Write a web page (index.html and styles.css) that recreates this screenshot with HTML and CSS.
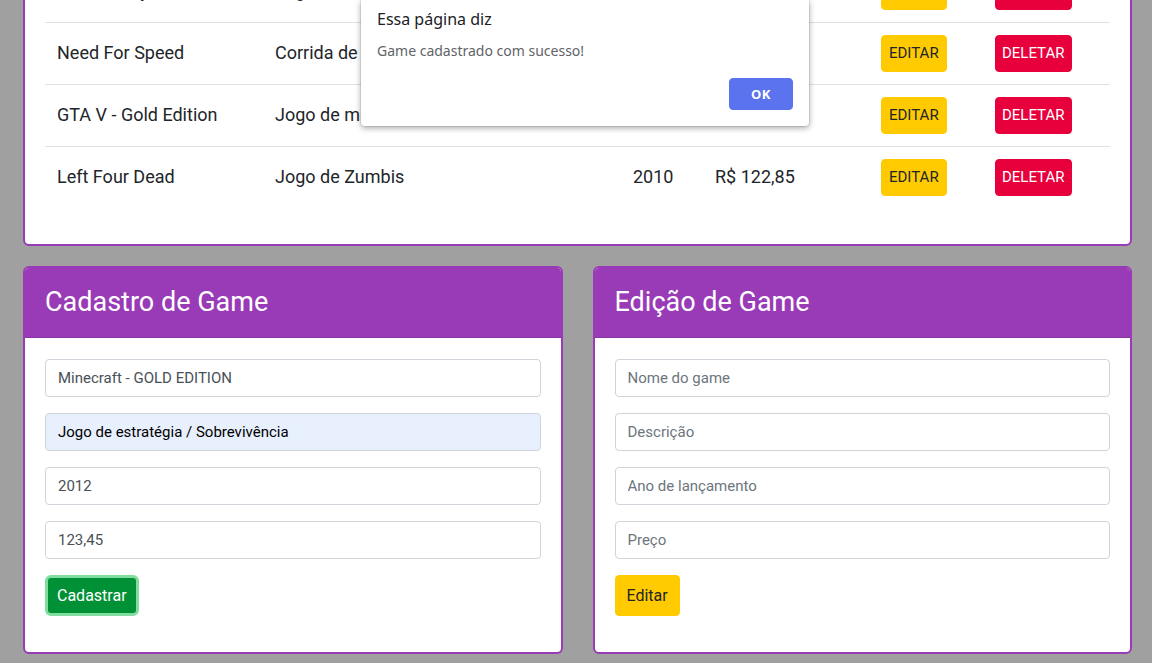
FILE: index.html
```html
<!DOCTYPE html>
<html lang="pt-BR">
<head>
<meta charset="utf-8">
<title>Games</title>
<link rel="stylesheet" href="styles.css">
</head>
<body>
<div class="page">
  <section class="card list-card">
    <header class="card-header"><h2>Lista de Games</h2></header>
    <div class="card-body">
      <div class="games">
        <div class="row head">
          <div class="cell">Nome</div>
          <div class="cell">Descrição</div>
          <div class="cell">Ano</div>
          <div class="cell">Preço</div>
          <div class="cell">Ações</div>
          <div class="cell"></div>
        </div>
        <div class="row">
          <div class="cell">Call of Duty</div>
          <div class="cell">Jogo de tiro</div>
          <div class="cell">2003</div>
          <div class="cell">R$ 99,90</div>
          <div class="cell"><button class="btn btn-edit">EDITAR</button></div>
          <div class="cell"><button class="btn btn-del">DELETAR</button></div>
        </div>
        <div class="row">
          <div class="cell">Need For Speed</div>
          <div class="cell">Corrida de rua</div>
          <div class="cell">2015</div>
          <div class="cell">R$ 89,90</div>
          <div class="cell"><button class="btn btn-edit">EDITAR</button></div>
          <div class="cell"><button class="btn btn-del">DELETAR</button></div>
        </div>
        <div class="row">
          <div class="cell">GTA V - Gold Edition</div>
          <div class="cell">Jogo de missões</div>
          <div class="cell">2013</div>
          <div class="cell">R$ 150,00</div>
          <div class="cell"><button class="btn btn-edit">EDITAR</button></div>
          <div class="cell"><button class="btn btn-del">DELETAR</button></div>
        </div>
        <div class="row">
          <div class="cell">Left Four Dead</div>
          <div class="cell">Jogo de Zumbis</div>
          <div class="cell">2010</div>
          <div class="cell">R$ 122,85</div>
          <div class="cell"><button class="btn btn-edit">EDITAR</button></div>
          <div class="cell"><button class="btn btn-del">DELETAR</button></div>
        </div>
      </div>
    </div>
  </section>

  <div class="forms">
    <section class="card">
      <header class="card-header"><h2>Cadastro de Game</h2></header>
      <form class="card-body form">
        <input class="field" type="text" value="Minecraft - GOLD EDITION">
        <input class="field autofill" type="text" value="Jogo de estratégia / Sobrevivência">
        <input class="field" type="text" value="2012">
        <input class="field" type="text" value="123,45">
        <div><button type="button" class="btn-form btn-green">Cadastrar</button></div>
      </form>
    </section>
    <section class="card">
      <header class="card-header"><h2>Edição de Game</h2></header>
      <form class="card-body form">
        <input class="field" type="text" placeholder="Nome do game">
        <input class="field" type="text" placeholder="Descrição">
        <input class="field" type="text" placeholder="Ano de lançamento">
        <input class="field" type="text" placeholder="Preço">
        <div><button type="button" class="btn-form btn-yellow">Editar</button></div>
      </form>
    </section>
  </div>
</div>

<div class="dialog">
  <div class="dialog-title">Essa página diz</div>
  <div class="dialog-msg">Game cadastrado com sucesso!</div>
  <div class="dialog-actions"><button class="dialog-ok">OK</button></div>
</div>
</body>
</html>
```
FILE: styles.css
```css
* { box-sizing: border-box; }

html, body {
  margin: 0;
  padding: 0;
  height: 100%;
  overflow: hidden;
}

body {
  background: #a0a0a0;
  font-family: Roboto, "Liberation Sans", sans-serif;
  color: #212529;
  position: relative;
}

.page {
  padding: 0 20px 0 23px;
  margin-top: -180px;
}

.card {
  background: #fff;
  border: 2px solid #993ab7;
  border-radius: 6px;
  overflow: hidden;
}

.card-header {
  height: 70px;
  background: #993ab7;
  border-bottom: 1px solid #8a33a5;
  display: flex;
  align-items: center;
  padding: 0 20px;
}

.card-header h2 {
  margin: 0;
  color: #fff;
  font-weight: 400;
  font-size: 27px;
  line-height: 1;
}

.card-body {
  padding: 20px 20px 36px;
}

.games {
  display: flex;
  flex-direction: column;
}

.row {
  display: grid;
  grid-template-columns: 218px 358px 82px 166px 114px 1fr;
  align-items: center;
  border-top: 1px solid #dee2e6;
  height: 62px;
  font-size: 18px;
  padding-bottom: 3px;
}

.row.head {
  border-top: 0;
  border-bottom: 2px solid #dee2e6;
  height: 49px;
  font-weight: 700;
}

.row.head + .row { border-top: 0; height: 61px; }

.cell {
  padding: 0 12px;
  white-space: nowrap;
}

.cell .btn { margin-bottom: -3px; }

.btn {
  font-family: inherit;
  font-size: 15px;
  line-height: 21px;
  padding: 7px 7px;
  border: 1px solid transparent;
  border-radius: 4px;
  cursor: pointer;
}

.btn-edit { background: #ffca00; border-color: #ffca00; color: #212529; }
.btn-del  { background: #e8003d; border-color: #e8003d; color: #fff; padding: 7px 6px; }

.forms {
  margin-top: 20px;
  display: grid;
  grid-template-columns: 1fr 1fr;
  gap: 30px;
}

.form {
  display: flex;
  flex-direction: column;
  gap: 16px;
  padding-top: 21px;
}

.field {
  height: 38px;
  width: 100%;
  border: 1px solid #ced4da;
  border-radius: 4px;
  padding: 0 12px;
  font-family: inherit;
  font-size: 15px;
  color: #495057;
  background: #fff;
}

.field::placeholder { color: #6c757d; }

.field.autofill {
  background: #e8f0fe;
  color: #000;
}

.btn-form {
  font-family: inherit;
  font-size: 16px;
  height: 41px;
  padding: 0 12px;
  border-radius: 4px;
  border: 1px solid transparent;
  cursor: pointer;
}

.btn-green {
  background: #009136;
  color: #fff;
  border: 3px solid #80dd9f;
  border-radius: 6px;
  padding: 0 9px;
}

.btn-yellow {
  background: #ffca00;
  border-color: #ffca00;
  color: #212529;
  padding: 0 11px;
}

.dialog {
  position: absolute;
  top: 0;
  left: 361px;
  width: 448px;
  background: #fff;
  border-radius: 0 0 4px 4px;
  box-shadow: 0 2px 6px rgba(0, 0, 0, .35), 0 0 0 1px rgba(0, 0, 0, .08);
  padding: 8px 16px 16px;
  font-family: "Noto Sans", "Open Sans", sans-serif;
}

.dialog-title {
  font-size: 16px;
  line-height: 22px;
  color: #202124;
}

.dialog-msg {
  margin-top: 11px;
  font-size: 14px;
  line-height: 20px;
  color: #5f6368;
}

.dialog-actions {
  margin-top: 17px;
  display: flex;
  justify-content: flex-end;
}

.dialog-ok {
  width: 64px;
  height: 32px;
  background: #5b73ee;
  color: #fff;
  border: 1px solid #5b73ee;
  border-radius: 4px;
  font-family: inherit;
  font-weight: 700;
  font-size: 13px;
  letter-spacing: .5px;
}
```
